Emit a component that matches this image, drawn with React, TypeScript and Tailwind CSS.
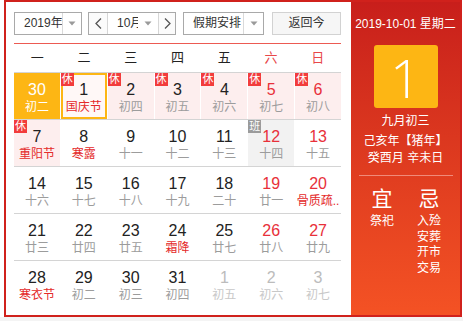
import React from "react";

type C = {
  d: string;
  l: string;
  red?: boolean;
  lred?: boolean;
  rest?: boolean;
  work?: boolean;
  today?: boolean;
  sel?: boolean;
  other?: boolean;
};

const rows: C[][] = [
  [
    { d: "30", l: "初二", today: true },
    { d: "1", l: "国庆节", lred: true, rest: true, sel: true },
    { d: "2", l: "初四", rest: true },
    { d: "3", l: "初五", rest: true },
    { d: "4", l: "初六", rest: true },
    { d: "5", l: "初七", rest: true, red: true },
    { d: "6", l: "初八", rest: true, red: true },
  ],
  [
    { d: "7", l: "重阳节", lred: true, rest: true },
    { d: "8", l: "寒露", lred: true },
    { d: "9", l: "十一" },
    { d: "10", l: "十二" },
    { d: "11", l: "十三" },
    { d: "12", l: "十四", red: true, work: true },
    { d: "13", l: "十五", red: true },
  ],
  [
    { d: "14", l: "十六" },
    { d: "15", l: "十七" },
    { d: "16", l: "十八" },
    { d: "17", l: "十九" },
    { d: "18", l: "二十" },
    { d: "19", l: "廿一", red: true },
    { d: "20", l: "骨质疏..", red: true, lred: true },
  ],
  [
    { d: "21", l: "廿三" },
    { d: "22", l: "廿四" },
    { d: "23", l: "廿五" },
    { d: "24", l: "霜降", lred: true },
    { d: "25", l: "廿七" },
    { d: "26", l: "廿八", red: true },
    { d: "27", l: "廿九", red: true },
  ],
  [
    { d: "28", l: "寒衣节", lred: true },
    { d: "29", l: "初二" },
    { d: "30", l: "初三" },
    { d: "31", l: "初四" },
    { d: "1", l: "初五", other: true },
    { d: "2", l: "初六", other: true },
    { d: "3", l: "初七", other: true },
  ],
];

function Arrow() {
  return (
    <svg width="8" height="5" viewBox="0 0 8 5">
      <path d="M0.5 0.5 L7.5 0.5 L4 4.5 Z" fill="#9a9a9a" />
    </svg>
  );
}

function Cell({ c }: { c: C }) {
  let box = "bg-white";
  if (c.today) box = "bg-[#fdb614]";
  else if (c.sel) box = "bg-[#fff8f7] border-2 border-[#fdb614]";
  else if (c.rest) box = "bg-[#fdeeee]";
  else if (c.work) box = "bg-[#f2f2f2]";

  let num = "text-[#222]";
  if (c.today) num = "text-white";
  else if (c.other) num = "text-[#bcbcbc]";
  else if (c.red) num = "text-[#e8303a]";

  let lun = "text-[#9c9c9c]";
  if (c.today) lun = "text-white";
  else if (c.other) lun = "text-[#c8c8c8]";
  else if (c.lred) lun = "text-[#e42a2a]";

  const badge = c.rest || c.work;
  return (
    <div
      className={`relative h-full flex flex-col items-center ${box} ${
        c.sel ? "pt-[6px]" : "pt-[8px]"
      }`}
    >
      {badge && (
        <div
          className={`absolute ${
            c.sel ? "-left-[2px] -top-[2px]" : "left-0 top-0"
          } w-[13px] h-[13px] text-[11px] leading-[13px] text-center text-white ${
            c.work ? "bg-[#9b9b9b]" : "bg-[#f23c3c]"
          }`}
        >
          {c.work ? "班" : "休"}
        </div>
      )}
      <div className={`text-[16px] leading-[18px] ${num}`}>{c.d}</div>
      <div className={`text-[12px] leading-[16px] whitespace-nowrap ${lun}`}>
        {c.l}
      </div>
    </div>
  );
}

export default function App() {
  return (
    <div className="w-[463px] h-[321px] bg-white font-[family-name:'Liberation_Sans','Noto_Sans_CJK_SC',sans-serif]">
      <div className="ml-[4px] w-[458px] h-[317px] border-2 border-[#d0211c] flex">
        {/* left */}
        <div className="w-[345px] h-full bg-white pl-[8px] pt-[10px]">
          <div className="flex h-[23px] text-[12px] text-[#333]">
            <div className="w-[68px] h-full border border-[#a9a9a9] bg-white flex">
              <div className="w-[47px] pl-[9px] overflow-hidden whitespace-nowrap leading-[21px]">
                2019年
              </div>
              <div className="flex-1 border-l border-[#dadada] flex items-center justify-center">
                <Arrow />
              </div>
            </div>
            <div className="ml-[6px] w-[88px] h-full border border-[#a9a9a9] bg-white flex">
              <div className="w-[19px] border-r border-[#d6d6d6] flex items-center justify-center bg-[#fbfbfb]">
                <svg width="7" height="11" viewBox="0 0 7 11">
                  <path d="M6 0.5 L1 5.5 L6 10.5" fill="none" stroke="#555" strokeWidth="1.3" />
                </svg>
              </div>
              <div className="w-[30px] pl-[9px] overflow-hidden whitespace-nowrap leading-[21px]">
                10月
              </div>
              <div className="w-[20px] flex items-center justify-center">
                <Arrow />
              </div>
              <div className="flex-1 border-l border-[#d6d6d6] flex items-center justify-center bg-[#fbfbfb]">
                <svg width="7" height="11" viewBox="0 0 7 11">
                  <path d="M1 0.5 L6 5.5 L1 10.5" fill="none" stroke="#555" strokeWidth="1.3" />
                </svg>
              </div>
            </div>
            <div className="ml-[7px] w-[81px] h-full border border-[#a9a9a9] bg-white flex">
              <div className="w-[59px] pl-[9px] overflow-hidden whitespace-nowrap leading-[21px]">
                假期安排
              </div>
              <div className="flex-1 border-l border-[#dadada] flex items-center justify-center">
                <Arrow />
              </div>
            </div>
            <div className="ml-[8px] w-[69px] h-full border border-[#d2d2d2] bg-[#f6f6f6] text-center leading-[21px]">
              返回今
            </div>
          </div>
          <div className="mt-[8px] w-[327px] h-px bg-[#ec5a52]" />
          <div className="w-[327px] grid grid-cols-7 h-[28px] items-center text-center text-[13px] text-[#222]">
            <div>一</div>
            <div>二</div>
            <div>三</div>
            <div>四</div>
            <div>五</div>
            <div className="text-[#e8474a]">六</div>
            <div className="text-[#e8474a]">日</div>
          </div>
          <div className="w-[327px]">
            {rows.map((r, i) => (
              <div
                key={i}
                className="grid grid-cols-7 gap-x-px h-[47px] border-t border-[#d4d4d4]"
              >
                {r.map((c, j) => (
                  <Cell key={j} c={c} />
                ))}
              </div>
            ))}
          </div>
        </div>
        {/* right */}
        <div className="flex-1 h-full bg-linear-to-b from-[#c81e1b] to-[#f45224] flex flex-col items-center text-white pt-[14px]">
          <div className="text-[12px] leading-[16px] whitespace-nowrap">
            2019-10-01 星期二
          </div>
          <div className="mt-[13px] w-[64px] h-[63px] rounded-[3px] bg-[#fdb614] flex items-center justify-center text-[54px] leading-none font-[family-name:'Open_Sans',sans-serif] font-light">
            1
          </div>
          <div className="mt-[4px] text-[12px] leading-[18px]">九月初三</div>
          <div className="mt-[2px] text-[12px] leading-[18px] whitespace-nowrap">
            己亥年【猪年】
          </div>
          <div className="-mt-px text-[12px] leading-[18px] whitespace-nowrap">
            癸酉月 辛未日
          </div>
          <div className="mt-[8px] w-[94px] h-px bg-[#f08a7a]" />
          <div className="mt-[11px] w-[94px] flex">
            <div className="w-[47px] flex flex-col items-center">
              <div className="text-[21px] leading-[24px]">宜</div>
              <div className="mt-[3px] text-[12px] leading-[15.5px]">祭祀</div>
            </div>
            <div className="w-[47px] flex flex-col items-center">
              <div className="text-[21px] leading-[24px]">忌</div>
              <div className="mt-[3px] text-[12px] leading-[15.5px] flex flex-col items-center">
                <span>入殓</span>
                <span>安葬</span>
                <span>开市</span>
                <span>交易</span>
              </div>
            </div>
          </div>
        </div>
      </div>
      <div className="h-[4px] bg-[#f4f4f4]" />
    </div>
  );
}
